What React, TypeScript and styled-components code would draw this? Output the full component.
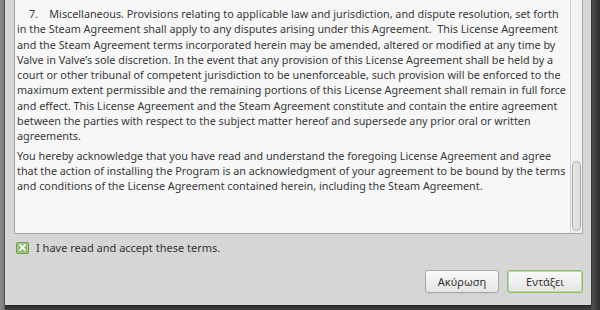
import React from "react";
import styled, { createGlobalStyle } from "styled-components";

const paragraphs: string[][] = [
  [
    "7.\u00a0\u00a0\u00a0\u00a0Miscellaneous. Provisions relating to applicable law and jurisdiction, and dispute resolution, set forth",
    "in the Steam Agreement shall apply to any disputes arising under this Agreement.\u00a0 This License Agreement",
    "and the Steam Agreement terms incorporated herein may be amended, altered or modified at any time by",
    "Valve in Valve\u2019s sole discretion. In the event that any provision of this License Agreement shall be held by a",
    "court or other tribunal of competent jurisdiction to be unenforceable, such provision will be enforced to the",
    "maximum extent permissible and the remaining portions of this License Agreement shall remain in full force",
    "and effect. This License Agreement and the Steam Agreement constitute and contain the entire agreement",
    "between the parties with respect to the subject matter hereof and supersede any prior oral or written",
    "agreements.",
  ],
  [
    "You hereby acknowledge that you have read and understand the foregoing License Agreement and agree",
    "that the action of installing the Program is an acknowledgment of your agreement to be bound by the terms",
    "and conditions of the License Agreement contained herein, including the Steam Agreement.",
  ],
];

export default function App() {
  return (
    <>
      <GlobalStyle />
      <Screen>
        <Window>
          <TextBox>
            <TextContent>
              {paragraphs.map((lines, i) => (
                <Paragraph key={i} first={i === 0}>
                  {lines.map((line, j) => (
                    <Line key={j}>{line}</Line>
                  ))}
                </Paragraph>
              ))}
            </TextContent>
            <ScrollTrack>
              <ScrollThumb />
            </ScrollTrack>
          </TextBox>
          <CheckRow>
            <CheckBox>
              <svg width="7" height="7" viewBox="0 0 7 7">
                <path
                  d="M1 1 L6 6 M6 1 L1 6"
                  stroke="#fff"
                  strokeWidth="1.8"
                  strokeLinecap="square"
                />
              </svg>
            </CheckBox>
            <CheckLabel>I have read and accept these terms.</CheckLabel>
          </CheckRow>
          <ButtonRow>
            <Button>Ακύρωση</Button>
            <Button primary>Εντάξει</Button>
          </ButtonRow>
        </Window>
      </Screen>
    </>
  );
}

const GlobalStyle = createGlobalStyle`
  html, body {
    margin: 0;
    padding: 0;
    background: #3a3a3a;
  }
  * {
    box-sizing: border-box;
  }
`;

const Screen = styled.div`
  width: 600px;
  height: 310px;
  overflow: hidden;
  display: flex;
  align-items: flex-start;
  padding-left: 5px;
  background: linear-gradient(
      to right,
      #8c8c8c 0,
      #7b7b7b 4px,
      #4a4a4a 5px,
      transparent 5px
    ),
    linear-gradient(to right, #3a3a3a 0, #3a3a3a 591px, #505050 592px, #2e2e2e 600px);
`;

const Window = styled.div`
  width: 586px;
  height: 305px;
  background: #d6d6d6;
  padding: 0 8px 12px 9px;
  display: flex;
  flex-direction: column;
  box-shadow: 0 1px 2px rgba(0, 0, 0, 0.5);
  font-family: "Noto Sans", "Open Sans", sans-serif;
`;

const TextBox = styled.div`
  height: 234px;
  display: flex;
  background: #f7f7f7;
  border: 1px solid #a6a6a6;
  border-top: none;
`;

const TextContent = styled.div`
  flex: 1;
  padding: 6px 0 0 2px;
  overflow: hidden;
  font-size: 10.8px;
  line-height: 15.3px;
  color: #383838;
`;

const Paragraph = styled.p<{ first?: boolean }>`
  margin: ${(p) => (p.first ? "0" : "4px")} 0 0;
  &:first-child > span:first-child {
    padding-left: 12px;
  }
`;

const Line = styled.span`
  display: block;
  white-space: pre;
`;

const ScrollTrack = styled.div`
  width: 12px;
  border-left: 1px solid #cfcfcf;
  background: #f2f2f2;
  display: flex;
  flex-direction: column;
  justify-content: flex-end;
  padding: 0 1px 2px 1px;
`;

const ScrollThumb = styled.div`
  height: 70px;
  border: 1px solid #a9a9a9;
  border-radius: 5px;
  background: linear-gradient(to right, #e6e6e6, #dcdcdc);
`;

const CheckRow = styled.div`
  display: flex;
  align-items: center;
  gap: 7px;
  margin-top: 7px;
  padding-left: 2px;
  height: 13px;
`;

const CheckBox = styled.span`
  width: 13px;
  height: 12px;
  border: 1px solid #6f9a4f;
  border-radius: 2px;
  background: #8fb86c;
  display: flex;
  align-items: center;
  justify-content: center;
  box-shadow: inset 0 0 0 1px #a9cc88;
`;

const CheckLabel = styled.span`
  font-size: 11px;
  color: #333;
`;

const ButtonRow = styled.div`
  margin-top: auto;
  display: flex;
  justify-content: flex-end;
  gap: 8px;
`;

const Button = styled.button<{ primary?: boolean }>`
  width: ${(p) => (p.primary ? "76px" : "74px")};
  height: 23px;
  font-family: "Noto Sans", "Open Sans", sans-serif;
  font-size: 11px;
  color: #333;
  border-radius: 3px;
  border: 1px solid ${(p) => (p.primary ? "#8dbd68" : "#a8a8a8")};
  box-shadow: ${(p) =>
    p.primary ? "inset 0 0 0 1px #b9d9a0" : "0 1px 0 rgba(0,0,0,0.05)"};
  background: linear-gradient(#fafafa, #e4e4e4);
  padding: 0;
  cursor: pointer;
`;
